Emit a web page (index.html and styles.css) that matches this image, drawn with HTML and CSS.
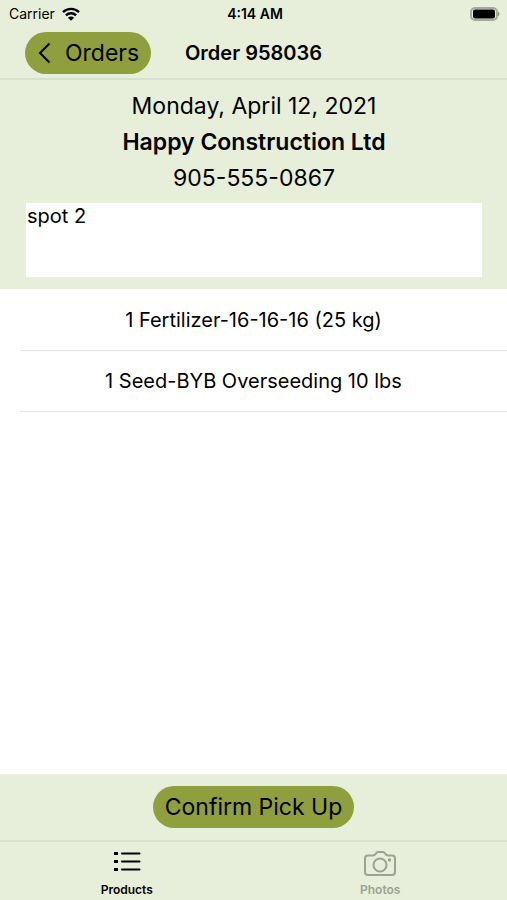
FILE: index.html
```html
<!DOCTYPE html>
<html lang="en">
<head>
<meta charset="utf-8">
<meta name="viewport" content="width=device-width, initial-scale=1">
<title>Order 958036</title>
<link rel="stylesheet" href="styles.css">
</head>
<body>
<div class="app">
  <div class="status">
    <div class="status-left">
      <span>Carrier</span>
      <svg class="wifi" viewBox="0 0 18 14" aria-hidden="true">
        <path d="M1 5.200a11.400 11.400 0 0 1 16 0M3.900 8.300a7.300 7.300 0 0 1 10.200 0" fill="none" stroke="#000" stroke-width="2.400"/>
        <path d="M9 13.800 5.900 10.800a4.400 4.400 0 0 1 6.200 0z"/>
      </svg>
    </div>
    <span class="time">4:14 AM</span>
    <div class="status-right">
      <svg class="battery" viewBox="0 0 31 14" aria-hidden="true">
        <rect x="1" y="1" width="26" height="12" rx="4" fill="none" stroke="#a5aa9d" stroke-width="2"/>
        <rect x="3" y="2.500" width="22" height="9" rx="2"/>
        <path d="M28 4.500q3 2.500 0 5z" fill="#8f9488"/>
      </svg>
    </div>
  </div>
  <header class="nav">
    <div class="nav-side">
      <button class="pill back" type="button">
        <svg class="chevron" viewBox="0 0 14 22" aria-hidden="true"><path d="M12.500 1.500 3 11l9.500 9.500" fill="none" stroke="#000" stroke-width="2"/></svg>
        <span>Orders</span>
      </button>
    </div>
    <h1 class="title">Order 958036</h1>
    <div class="nav-side"></div>
  </header>
  <section class="details">
    <p class="line">Monday, April 12, 2021</p>
    <p class="line name">Happy Construction Ltd</p>
    <p class="line">905-555-0867</p>
    <textarea class="notes" aria-label="Notes">spot 2</textarea>
  </section>
  <main class="content">
    <ul class="products">
      <li class="product">1 Fertilizer-16-16-16 (25 kg)</li>
      <li class="product">1 Seed-BYB Overseeding 10 lbs</li>
    </ul>
  </main>
  <div class="actions">
    <button class="pill" type="button">Confirm Pick Up</button>
  </div>
  <nav class="tabs">
    <a class="tab active" href="#products" aria-current="page">
      <svg class="tab-icon" viewBox="0 0 34 28" aria-hidden="true">
        <path d="M4 3.500h4M4 11.500h4M4 19.500h4" stroke="currentColor" stroke-width="2.800"/>
        <path d="M12 3.500h17.500M12 11.500h17.500M12 19.500h17.500" stroke="currentColor" stroke-width="2" stroke-linecap="round"/>
      </svg>
      <span>Products</span>
    </a>
    <a class="tab" href="#photos">
      <svg class="tab-icon" viewBox="0 0 34 28" aria-hidden="true">
        <g fill="none" stroke="currentColor" stroke-width="2" stroke-linejoin="round">
          <path d="M5 5.500h4.500q1.500 0 2.500-1l1.500-1.700q.8-.8 2-.8h4q1.200 0 2 .8l1.500 1.700q1 1 2.500 1H29q3 0 3 3V22q0 3-3 3H5q-3 0-3-3V8.500q0-3 3-3z"/>
          <circle cx="17" cy="15" r="6.500"/>
        </g>
        <circle cx="26.500" cy="10" r="1.700" fill="currentColor"/>
      </svg>
      <span>Photos</span>
    </a>
  </nav>
</div>
</body>
</html>
```
FILE: styles.css
```css
* {
  box-sizing: border-box;
}

body {
  margin: 0;
  background: #fff;
  color: #000;
  font-family: Inter, "Liberation Sans", sans-serif;
}

.app {
  display: flex;
  flex-direction: column;
  min-height: 100vh;
}

.status,
.nav,
.details,
.actions,
.tabs {
  background: #e7efda;
}

.status {
  display: grid;
  grid-template-columns: 1fr auto 1fr;
  align-items: center;
  height: 27px;
  padding: 0 6px 0 9px;
  font-size: 14px;
}

.status-left {
  display: flex;
  align-items: center;
  gap: 7px;
}

.wifi {
  width: 18px;
  height: 14px;
}

.time {
  font-weight: 600;
}

.status-right {
  display: flex;
  justify-content: flex-end;
}

.battery {
  width: 31px;
  height: 14px;
}

.nav {
  display: grid;
  grid-template-columns: 1fr auto 1fr;
  align-items: center;
  height: 53px;
  padding: 0 25px;
  border-bottom: 2px solid #d9e0cd;
}

.nav-side {
  display: flex;
}

.title {
  margin: 0;
  font-size: 20px;
  font-weight: 600;
}

.pill {
  display: flex;
  align-items: center;
  height: 42px;
  padding: 0 12px;
  border: 0;
  border-radius: 21px;
  background: #8f9f3e;
  color: #000;
  font-family: inherit;
  font-size: 23px;
}

.back {
  gap: 14px;
}

.chevron {
  width: 14px;
  height: 22px;
}

.details {
  padding: 8px 25px 12px 26px;
}

.line {
  margin: 0;
  font-size: 23px;
  line-height: 36px;
  text-align: center;
}

.name {
  font-weight: 600;
}

.notes {
  display: block;
  width: 100%;
  height: 74px;
  margin-top: 7px;
  padding: 0 1px;
  border: 0;
  outline: 0;
  resize: none;
  background: #fff;
  color: #000;
  font-family: inherit;
  font-size: 20px;
  line-height: 26px;
}

.content {
  flex: 1;
  padding-top: 1px;
}

.products {
  margin: 0;
  padding: 0;
  list-style: none;
}

.product {
  padding-right: 20px;
  margin-left: 20px;
  border-bottom: 1px solid #e4e4e4;
  font-size: 20px;
  line-height: 60px;
  text-align: center;
}

.actions {
  display: flex;
  justify-content: center;
  padding: 12px;
}

.tabs {
  display: grid;
  grid-template-columns: 1fr 1fr;
  height: 60px;
  border-top: 2px solid #d9e0cd;
}

.tab {
  display: flex;
  flex-direction: column;
  align-items: center;
  gap: 4px;
  padding-top: 8px;
  color: #9ba193;
  font-size: 12px;
  font-weight: 600;
  line-height: 16px;
  text-decoration: none;
}

.tab.active {
  color: #000;
}

.tab-icon {
  width: 34px;
  height: 28px;
}
```
